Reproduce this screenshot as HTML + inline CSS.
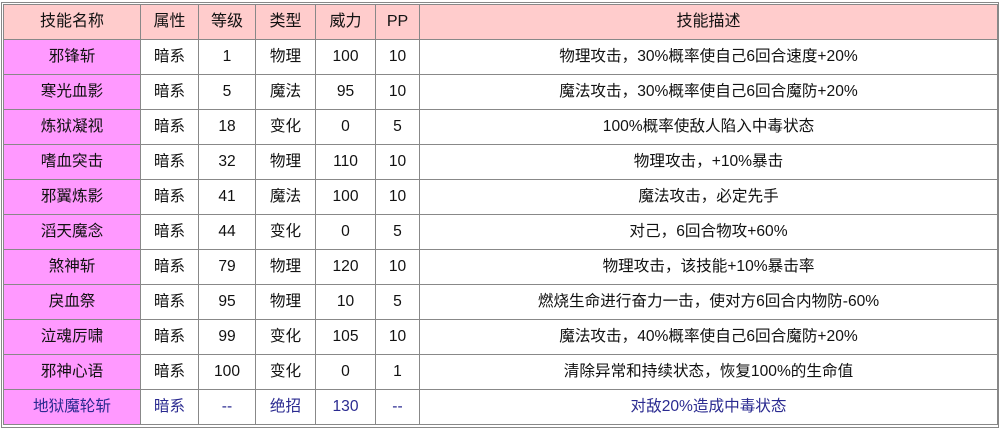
<!DOCTYPE html>
<html><head><meta charset="utf-8"><style>
body{margin:0;background:#fff;width:1002px;height:430px;overflow:hidden;position:relative;font-family:"Liberation Sans","Noto Sans CJK SC",sans-serif;}
.frame{position:absolute;left:1px;top:2px;width:998px;height:426px;border:1px solid #888;box-sizing:border-box}
table{position:absolute;left:3px;top:4px;border-collapse:collapse;width:995px;font-size:15.6px;color:#111}
td{border:1px solid #888;height:34px;text-align:center;padding:0;line-height:20px;vertical-align:middle}
tr:first-child td{background:#ffcccc;font-size:16px}
td:first-child{background:#ff99ff}
tr.b td{color:#2a2a90}
</style></head><body>
<div class="frame"></div>
<table>
<colgroup><col style="width:137px"><col style="width:58px"><col style="width:57px"><col style="width:60px"><col style="width:60px"><col style="width:44px"><col></colgroup>
<tr><td>技能名称</td><td>属性</td><td>等级</td><td>类型</td><td>威力</td><td>PP</td><td>技能描述</td></tr>
<tr><td>邪锋斩</td><td>暗系</td><td>1</td><td>物理</td><td>100</td><td>10</td><td>物理攻击，30%概率使自己6回合速度+20%</td></tr>
<tr><td>寒光血影</td><td>暗系</td><td>5</td><td>魔法</td><td>95</td><td>10</td><td>魔法攻击，30%概率使自己6回合魔防+20%</td></tr>
<tr><td>炼狱凝视</td><td>暗系</td><td>18</td><td>变化</td><td>0</td><td>5</td><td>100%概率使敌人陷入中毒状态</td></tr>
<tr><td>嗜血突击</td><td>暗系</td><td>32</td><td>物理</td><td>110</td><td>10</td><td>物理攻击，+10%暴击</td></tr>
<tr><td>邪翼炼影</td><td>暗系</td><td>41</td><td>魔法</td><td>100</td><td>10</td><td>魔法攻击，必定先手</td></tr>
<tr><td>滔天魔念</td><td>暗系</td><td>44</td><td>变化</td><td>0</td><td>5</td><td>对己，6回合物攻+60%</td></tr>
<tr><td>煞神斩</td><td>暗系</td><td>79</td><td>物理</td><td>120</td><td>10</td><td>物理攻击，该技能+10%暴击率</td></tr>
<tr><td>戾血祭</td><td>暗系</td><td>95</td><td>物理</td><td>10</td><td>5</td><td>燃烧生命进行奋力一击，使对方6回合内物防-60%</td></tr>
<tr><td>泣魂厉啸</td><td>暗系</td><td>99</td><td>变化</td><td>105</td><td>10</td><td>魔法攻击，40%概率使自己6回合魔防+20%</td></tr>
<tr><td>邪神心语</td><td>暗系</td><td>100</td><td>变化</td><td>0</td><td>1</td><td>清除异常和持续状态，恢复100%的生命值</td></tr>
<tr class="b"><td>地狱魔轮斩</td><td>暗系</td><td>--</td><td>绝招</td><td>130</td><td>--</td><td>对敌20%造成中毒状态</td></tr>
</table>
</body></html>
